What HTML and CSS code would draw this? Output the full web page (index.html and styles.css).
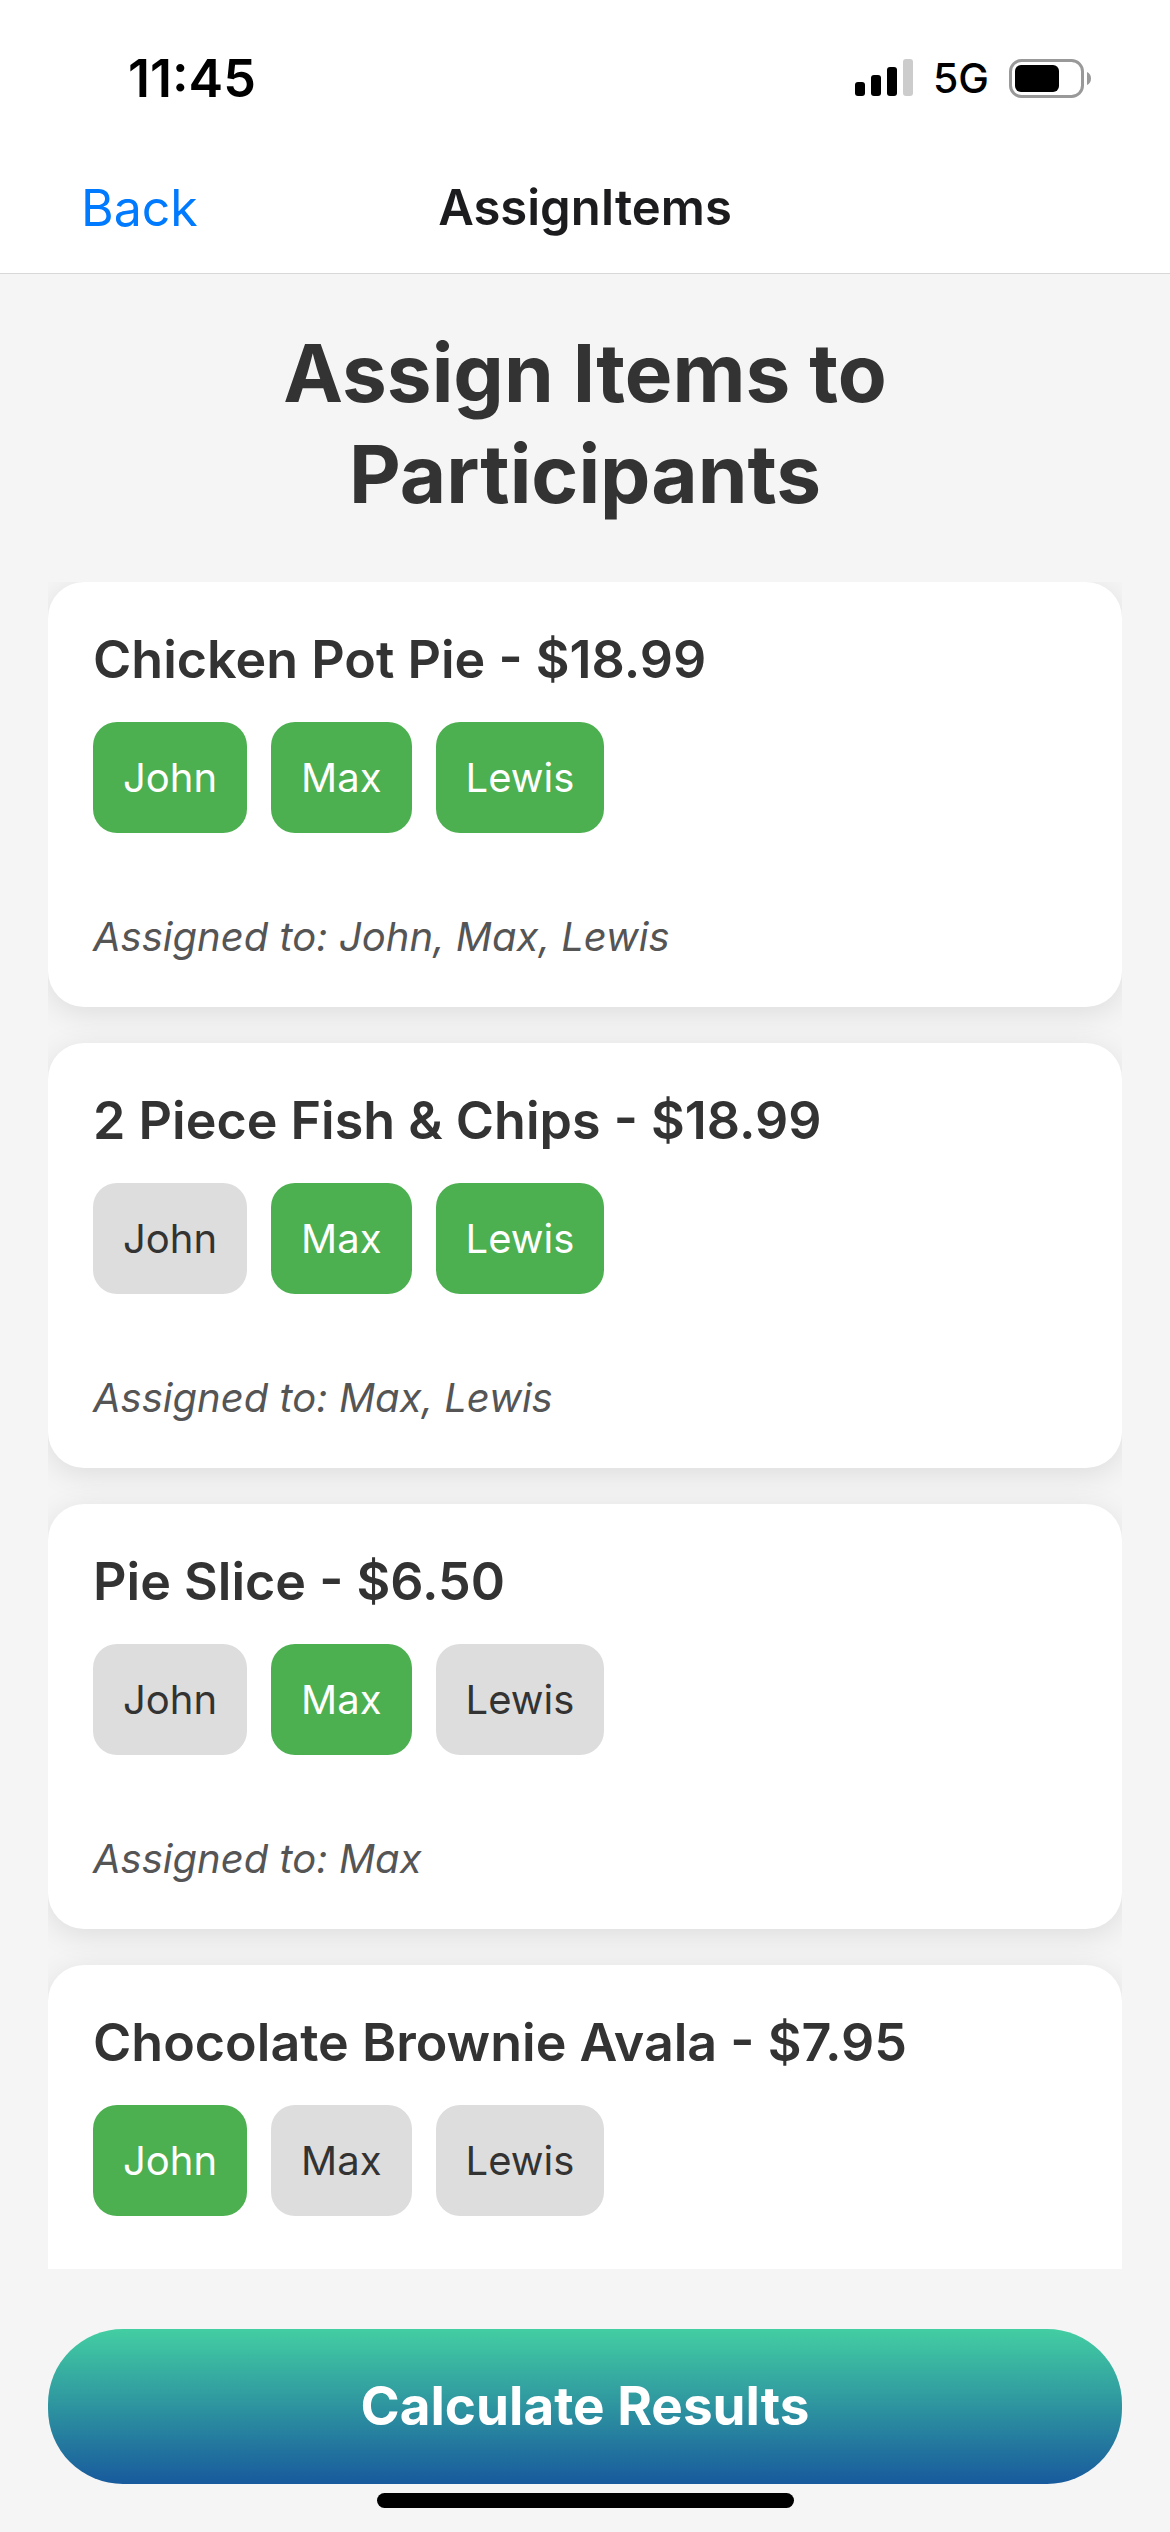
FILE: index.html
```html
<!DOCTYPE html>
<html lang="en">
<head>
    <meta charset="UTF-8">
    <meta name="viewport" content="width=device-width, initial-scale=1">
    <title>AssignItems</title>
    <link rel="stylesheet" href="styles.css">
</head>
<body>
    <header class="header">
        <div class="status-bar">
            <span class="time">11:45</span>
            <div class="status-icons">
                <svg class="signal" width="58" height="38" viewBox="0 0 58 38" aria-hidden="true">
                    <rect x="0" y="23" width="10" height="14" rx="3"/>
                    <rect x="16" y="16" width="10" height="21" rx="3"/>
                    <rect x="32" y="8" width="10" height="29" rx="3"/>
                    <rect x="48" y="0" width="10" height="37" rx="3" fill="#ccc"/>
                </svg>
                <span class="network">5G</span>
                <svg class="battery" width="82" height="39" viewBox="0 0 82 39" aria-hidden="true">
                    <rect x="1.5" y="1.5" width="72" height="36" rx="11" fill="none" stroke="#999" stroke-width="3"/>
                    <rect x="6" y="6" width="44" height="27" rx="6"/>
                    <path d="M78 13c2.5 1 4 3.5 4 6.500s-1.500 5.500-4 6.500z" fill="#999"/>
                </svg>
            </div>
        </div>
        <nav class="nav-bar">
            <a class="back-link" href="#">Back</a>
            <span class="nav-title">AssignItems</span>
        </nav>
    </header>

    <main class="content">
        <h1 class="heading">Assign Items to Participants</h1>

        <div class="item-list">
            <section class="card">
                <h2 class="item-title">Chicken Pot Pie - $18.99</h2>
                <div class="participants">
                    <button class="chip selected" aria-pressed="true">John</button>
                    <button class="chip selected" aria-pressed="true">Max</button>
                    <button class="chip selected" aria-pressed="true">Lewis</button>
                </div>
                <p class="assigned">Assigned to: John, Max, Lewis</p>
            </section>

            <section class="card">
                <h2 class="item-title">2 Piece Fish &amp; Chips - $18.99</h2>
                <div class="participants">
                    <button class="chip" aria-pressed="false">John</button>
                    <button class="chip selected" aria-pressed="true">Max</button>
                    <button class="chip selected" aria-pressed="true">Lewis</button>
                </div>
                <p class="assigned">Assigned to: Max, Lewis</p>
            </section>

            <section class="card">
                <h2 class="item-title">Pie Slice - $6.50</h2>
                <div class="participants">
                    <button class="chip" aria-pressed="false">John</button>
                    <button class="chip selected" aria-pressed="true">Max</button>
                    <button class="chip" aria-pressed="false">Lewis</button>
                </div>
                <p class="assigned">Assigned to: Max</p>
            </section>

            <section class="card">
                <h2 class="item-title">Chocolate Brownie Avala - $7.95</h2>
                <div class="participants">
                    <button class="chip selected" aria-pressed="true">John</button>
                    <button class="chip" aria-pressed="false">Max</button>
                    <button class="chip" aria-pressed="false">Lewis</button>
                </div>
            </section>
        </div>

        <button class="calculate-button">Calculate Results</button>
    </main>

    <div class="home-indicator"></div>
</body>
</html>
```
FILE: styles.css
```css
* {
    box-sizing: border-box;
}

body {
    margin: 0;
    height: 100vh;
    display: flex;
    flex-direction: column;
    background-color: #f5f5f5;
    color: #333;
    font-family: Inter, "Liberation Sans", sans-serif;
}

button {
    border: none;
    font-family: inherit;
    cursor: pointer;
}

/* Header */
.header {
    background-color: white;
    border-bottom: 1px solid #d8d8d8;
}

.status-bar {
    display: flex;
    justify-content: space-between;
    align-items: center;
    height: 156px;
    padding: 0 79px 0 128px;
    color: black;
}

.time {
    font-size: 52px;
    font-weight: 600;
}

.status-icons {
    display: flex;
    align-items: center;
    gap: 20px;
}

.network {
    font-size: 41px;
    font-weight: 500;
}

.nav-bar {
    display: grid;
    grid-template-columns: 1fr auto 1fr;
    align-items: center;
    height: 117px;
    padding: 0 81px;
    padding-bottom: 14px;
}

.back-link {
    color: #007aff;
    font-size: 50px;
    text-decoration: none;
}

.nav-title {
    color: #1c1c1e;
    font-size: 49px;
    font-weight: 600;
}

/* Content */
.content {
    flex: 1;
    min-height: 0;
    display: flex;
    flex-direction: column;
    padding: 48px 48px 0;
}

.heading {
    max-width: 800px;
    margin: 0 auto 58px;
    font-size: 80px;
    line-height: 101px;
    font-weight: 700;
    text-align: center;
}

.item-list {
    flex: 1;
    min-height: 0;
    overflow: hidden;
}

.card {
    margin-bottom: 36px;
    padding: 45px;
    min-height: 425px;
    background-color: white;
    border-radius: 36px;
    box-shadow: 0 6px 30px rgba(0, 0, 0, 0.1);
}

.item-title {
    margin: 0 0 30px;
    font-size: 52px;
    line-height: 65px;
    font-weight: 600;
}

.participants {
    display: flex;
    flex-wrap: wrap;
    gap: 24px;
    margin-bottom: 78px;
}

.chip {
    padding: 30px;
    background-color: #ddd;
    border-radius: 24px;
    color: #333;
    font-size: 40px;
    line-height: 51px;
}

.chip.selected {
    background-color: #4caf50;
    color: white;
}

.assigned {
    margin: 0;
    color: #555;
    font-size: 40px;
    line-height: 51px;
    font-style: italic;
}

.calculate-button {
    margin-top: 60px;
    padding: 45px;
    background: linear-gradient(#43cea2, #185a9d);
    border-radius: 75px;
    color: white;
    font-size: 53px;
    line-height: 65px;
    font-weight: 700;
}

.home-indicator {
    width: 417px;
    height: 15px;
    margin: 9px auto 24px;
    background-color: black;
    border-radius: 8px;
}
```
